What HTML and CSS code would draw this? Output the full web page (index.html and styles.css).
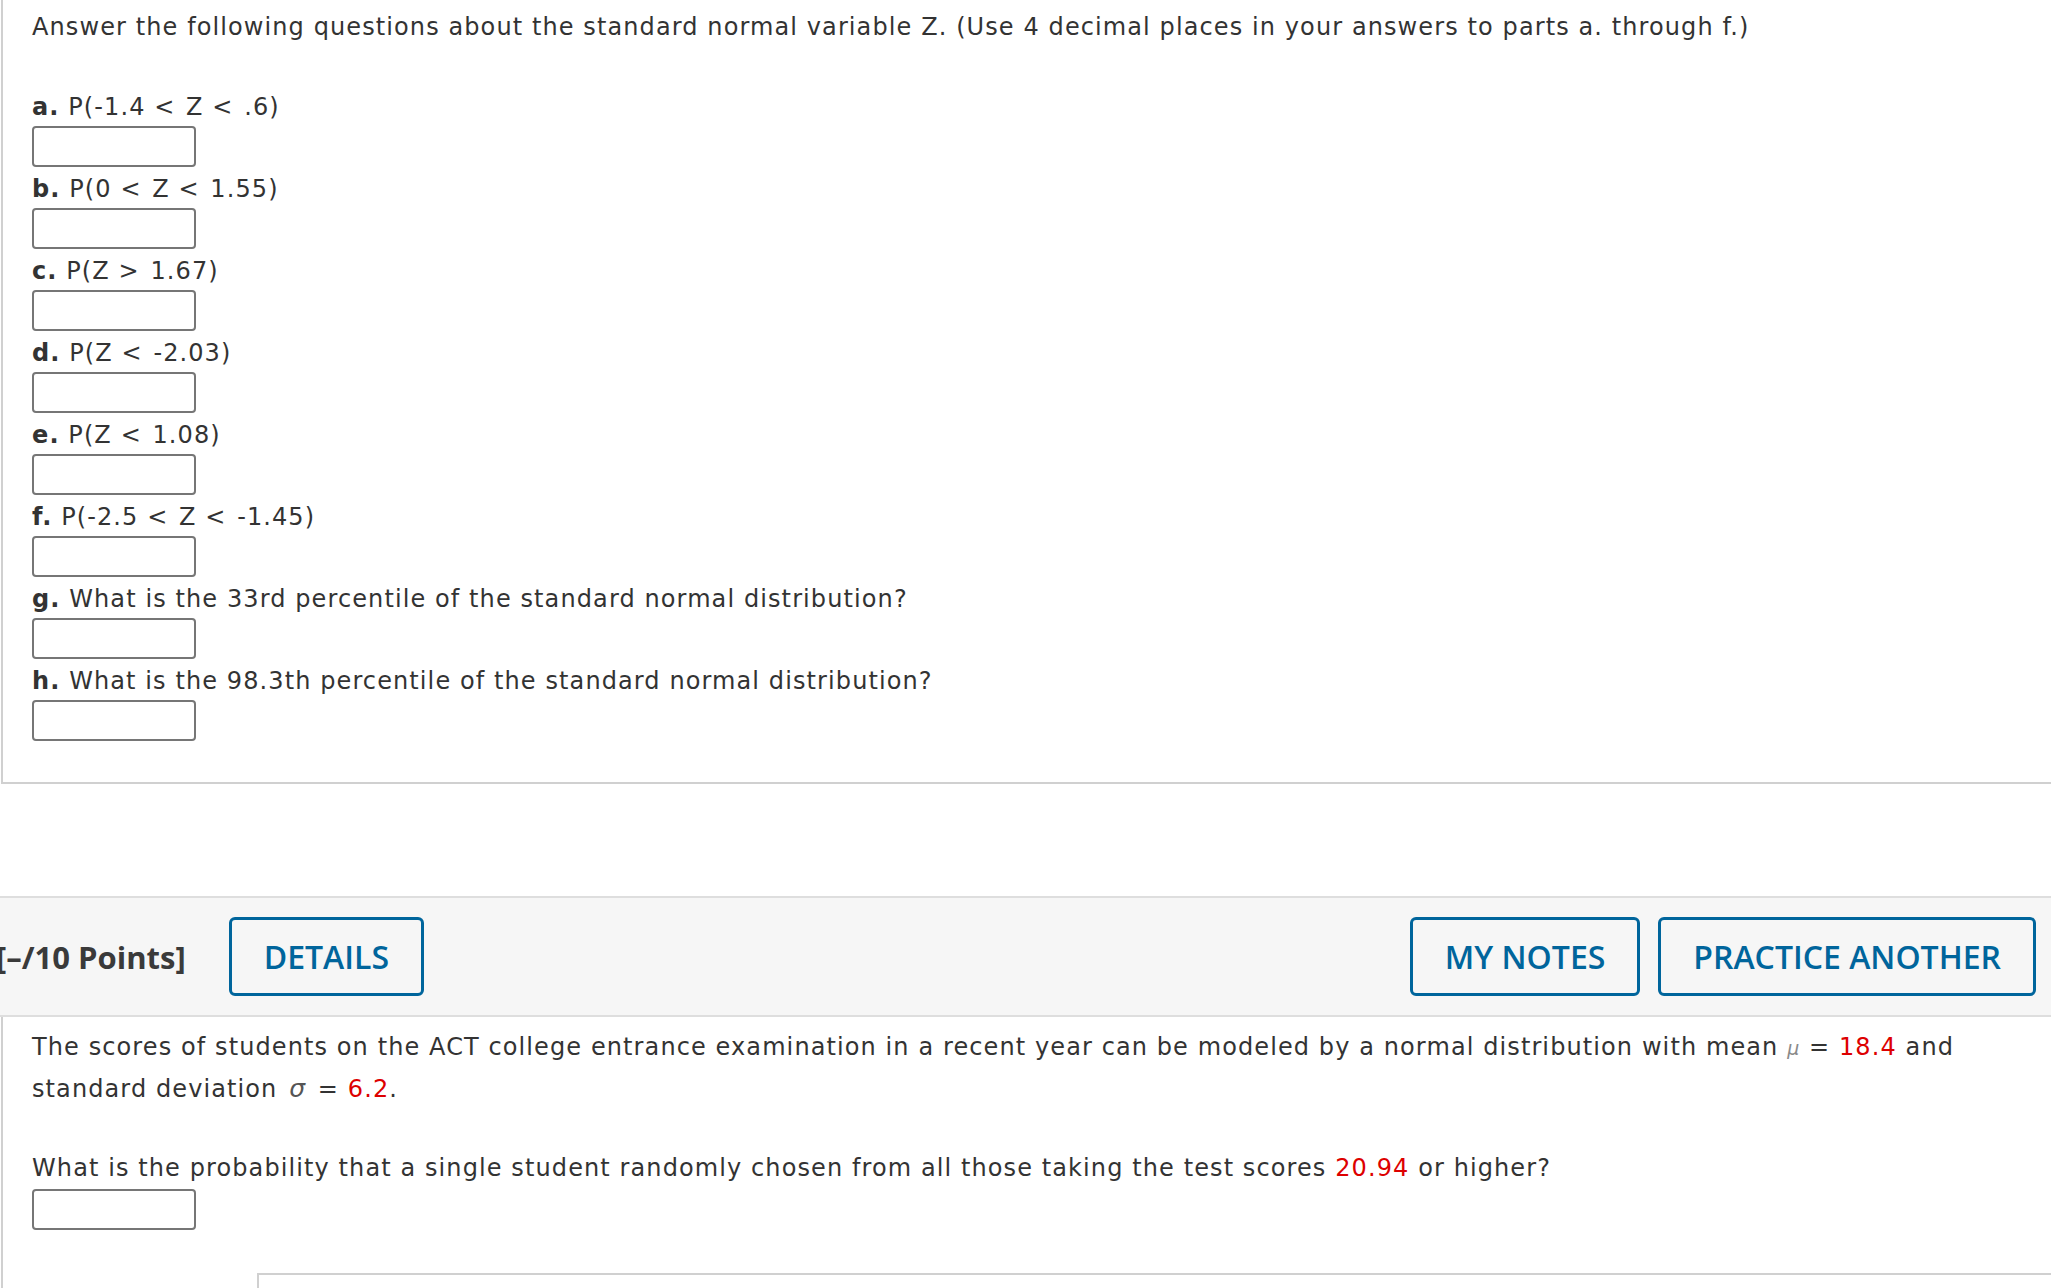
FILE: index.html
```html
<!DOCTYPE html>
<html lang="en">
<head>
<meta charset="utf-8">
<title>Standard normal questions</title>
<link rel="stylesheet" href="styles.css">
</head>
<body>
<div class="panel panel-top">
  <p class="intro">Answer the following questions about the standard normal variable Z. (Use 4 decimal places in your answers to parts a. through f.)</p>
  <div class="part"><div class="label"><b>a.</b> P(-1.4 <span class="op">&lt;</span> Z <span class="op">&lt;</span> .6)</div><div class="answer"></div></div>
  <div class="part"><div class="label"><b>b.</b> P(0 <span class="op">&lt;</span> Z <span class="op">&lt;</span> 1.55)</div><div class="answer"></div></div>
  <div class="part"><div class="label"><b>c.</b> P(Z <span class="op">&gt;</span> 1.67)</div><div class="answer"></div></div>
  <div class="part"><div class="label"><b>d.</b> P(Z <span class="op">&lt;</span> -2.03)</div><div class="answer"></div></div>
  <div class="part"><div class="label"><b>e.</b> P(Z <span class="op">&lt;</span> 1.08)</div><div class="answer"></div></div>
  <div class="part"><div class="label"><b>f.</b> P(-2.5 <span class="op">&lt;</span> Z <span class="op">&lt;</span> -1.45)</div><div class="answer"></div></div>
  <div class="part"><div class="label"><b>g.</b> What is the 33rd percentile of the standard normal distribution?</div><div class="answer"></div></div>
  <div class="part"><div class="label"><b>h.</b> What is the 98.3th percentile of the standard normal distribution?</div><div class="answer"></div></div>
</div>

<div class="bar">
  <span class="points">[–/10 Points]</span>
  <button class="btn btn-details">DETAILS</button>
  <span class="spacer"></span>
  <button class="btn btn-notes">MY NOTES</button>
  <button class="btn">PRACTICE ANOTHER</button>
</div>

<div class="panel panel-bottom">
  <p class="para">The scores of students on the ACT college entrance examination in a recent year can be modeled by a normal distribution with mean <span class="sym sym-mu">μ</span> = <span class="red">18.4</span> and<br>standard deviation <span class="sym sym-sigma">σ</span> = <span class="red">6.2</span>.</p>
  <p class="para para-q">What is the probability that a single student randomly chosen from all those taking the test scores <span class="red">20.94</span> or higher?</p>
  <div class="answer"></div>
  <div class="submit-box"></div>
</div>
</body>
</html>
```

FILE: styles.css
```css
html, body {
  margin: 0;
  padding: 0;
  background: #ffffff;
}

body {
  font-family: "DejaVu Sans", Verdana, sans-serif;
  font-size: 24px;
  color: #333333;
  overflow: hidden;
}

.panel {
  margin-left: 1px;
  border-left: 2px solid #d0d0d0;
  padding-left: 29px;
  letter-spacing: 1.1px;
}

.panel-top {
  padding-top: 8px;
  padding-bottom: 38px;
  border-bottom: 2px solid #d0d0d0;
}

.intro {
  margin: 0 0 42px 0;
  line-height: 38px;
  white-space: nowrap;
}

.part {
  display: flex;
  flex-direction: column;
}

.label {
  line-height: 38px;
  white-space: nowrap;
}

.label b {
  font-weight: bold;
}

.op {
  letter-spacing: 3px;
}

.answer {
  width: 160px;
  height: 37px;
  border: 2px solid #767676;
  border-radius: 4px;
  background: #ffffff;
  margin-bottom: 3px;
}

.bar {
  margin-top: 112px;
  height: 117px;
  background: #f6f6f6;
  border-top: 2px solid #dedede;
  border-bottom: 2px solid #dedede;
  display: flex;
  align-items: center;
  font-family: "Open Sans", sans-serif;
}

.points {
  font-weight: 700;
  font-size: 31px;
  color: #3a3a3a;
  margin-left: -4px;
  margin-right: 43px;
  white-space: nowrap;
}

.btn {
  font-family: "Open Sans", sans-serif;
  font-weight: 600;
  font-size: 32px;
  color: #00659c;
  background: transparent;
  border: 3px solid #00659c;
  border-radius: 6px;
  height: 79px;
  padding: 0 32px;
  margin-right: 15px;
  white-space: nowrap;
  line-height: 1;
}

.btn-details {
  margin-right: 0;
}

.btn-notes {
  margin-right: 18px;
}

.spacer {
  flex: 1;
}

.panel-bottom {
  padding-top: 10px;
}

.para {
  margin: 0;
  line-height: 41px;
  white-space: nowrap;
}

.para-q {
  margin-top: 38px;
}

.red {
  color: #dd0000;
}

.sym {
  font-family: "DejaVu Sans", sans-serif;
  font-style: italic;
  color: #555555;
}

.sym-sigma {
  font-size: 25px;
  line-height: 1;
  margin: 0 3px;
}

.sym-mu {
  font-size: 19px;
  color: #8a8a8a;
}

.panel-bottom .answer {
  margin-bottom: 0;
}

.submit-box {
  margin-top: 43px;
  margin-left: 225px;
  height: 40px;
  border-top: 2px solid #d0d0d0;
  border-left: 2px solid #d0d0d0;
}
```
